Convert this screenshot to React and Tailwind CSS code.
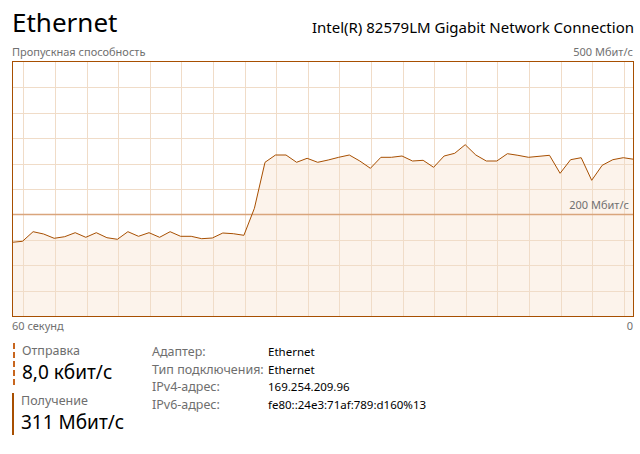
const points = [
  242.3, 241.3, 231.7, 234, 238.3, 236.7, 232.7, 237.3, 232.7, 237.7,
  239.3, 231.7, 236.3, 232.7, 237.3, 231.7, 236.3, 236.3, 238.7, 238,
  233, 233.7, 235.3, 208.3, 162.3, 155, 155, 162.3, 158.3, 162.3,
  160, 157.3, 155, 161, 168.3, 157.3, 157.3, 156, 161, 160.3,
  167.3, 156, 153.3, 144.7, 155, 161, 161, 153.7, 155.3, 157.3,
  156.3, 155.3, 173.3, 159.7, 157.7, 180.3, 165.3, 159.7, 157.7, 159.3,
]

const W = 620
const H = 254

function Chart() {
  const pts = points.map((y, i) => [10.54 * i - 1, y - 62])
  const line = pts.map(([x, y]) => `${x.toFixed(1)},${y.toFixed(1)}`).join(' ')
  const area = `${line} ${W + 2},${H + 2} -1,${H + 2}`
  const vlines = Array.from({ length: 20 }, (_, k) => 10.3 + 31.6 * k)
  const hlines = Array.from({ length: 9 }, (_, k) => 25.4 * (k + 1))

  return (
    <div className="relative w-[622px] h-[256px] border border-[#a74f01] bg-white">
      <svg width={W} height={H} viewBox={`0 0 ${W} ${H}`} className="block">
        <polygon points={area} fill="#fcf3eb" />
        {vlines.map((x) => (
          <line key={x} x1={Math.round(x) + 0.5} x2={Math.round(x) + 0.5} y1={0} y2={H} stroke="#f0dcc8" strokeWidth="1" />
        ))}
        {hlines.map((y, k) =>
          k === 5 ? null : (
            <line key={y} x1={0} x2={W} y1={Math.round(y) + 0.5} y2={Math.round(y) + 0.5} stroke="#f0dcc8" strokeWidth="1" />
          )
        )}
        <line x1={0} x2={W} y1={152.5} y2={152.5} stroke="#d9a57c" strokeWidth="1.5" />
        <polyline points={line} fill="none" stroke="#a74f01" strokeWidth="1" strokeLinejoin="round" />
      </svg>
      <div className="absolute right-[4px] top-[137px] text-[11px] leading-none text-[#707070]">200 Мбит/с</div>
    </div>
  )
}

function Stat({ label, value, dashed }) {
  return (
    <div className="flex">
      <div
        className={
          dashed
            ? 'w-0 ml-[1px] border-l-2 border-dashed border-[#c8661f]'
            : 'w-[2px] bg-[#a74f01]'
        }
      />
      <div className="pl-[7px]">
        <div className="text-[12.5px] leading-[16px] text-[#6e6e6e]">{label}</div>
        <div className="text-[19px] leading-[26px] text-black">{value}</div>
      </div>
    </div>
  )
}

const info = [
  ['Адаптер:', 'Ethernet'],
  ['Тип подключения:', 'Ethernet'],
  ['IPv4-адрес:', '169.254.209.96'],
  ['IPv6-адрес:', 'fe80::24e3:71af:789:d160%13'],
]

export default function App() {
  return (
    <div className="w-[640px] h-[454px] bg-white pl-3 pr-[6px] font-['Noto_Sans',sans-serif] overflow-hidden">
      <div className="flex items-end justify-between pt-[4px]">
        <div className="text-[26px] leading-[36px] text-black">Ethernet</div>
        <div className="text-[15px] leading-[22px] pb-[2px] text-black">Intel(R) 82579LM Gigabit Network Connection</div>
      </div>
      <div className="flex justify-between text-[11px] leading-[14px] text-[#707070] mt-[5px] mb-[2px]">
        <span>Пропускная способность</span>
        <span className="pr-[1px]">500 Мбит/с</span>
      </div>
      <Chart />
      <div className="flex justify-between text-[11px] leading-[14px] text-[#707070] mt-[2px]">
        <span>60 секунд</span>
        <span className="pr-[1px]">0</span>
      </div>
      <div className="flex mt-[10px]">
        <div className="w-[140px] flex flex-col gap-[8px]">
          <Stat label="Отправка" value="8,0 кбит/с" dashed />
          <Stat label="Получение" value="311 Мбит/с" />
        </div>
        <div className="flex flex-col leading-[17.7px]">
          {info.map(([k, v]) => (
            <div key={k} className="flex items-baseline">
              <span className="w-[116px] text-[12.5px] text-[#6e6e6e]">{k}</span>
              <span className="text-[11.5px] text-black">{v}</span>
            </div>
          ))}
        </div>
      </div>
    </div>
  )
}
